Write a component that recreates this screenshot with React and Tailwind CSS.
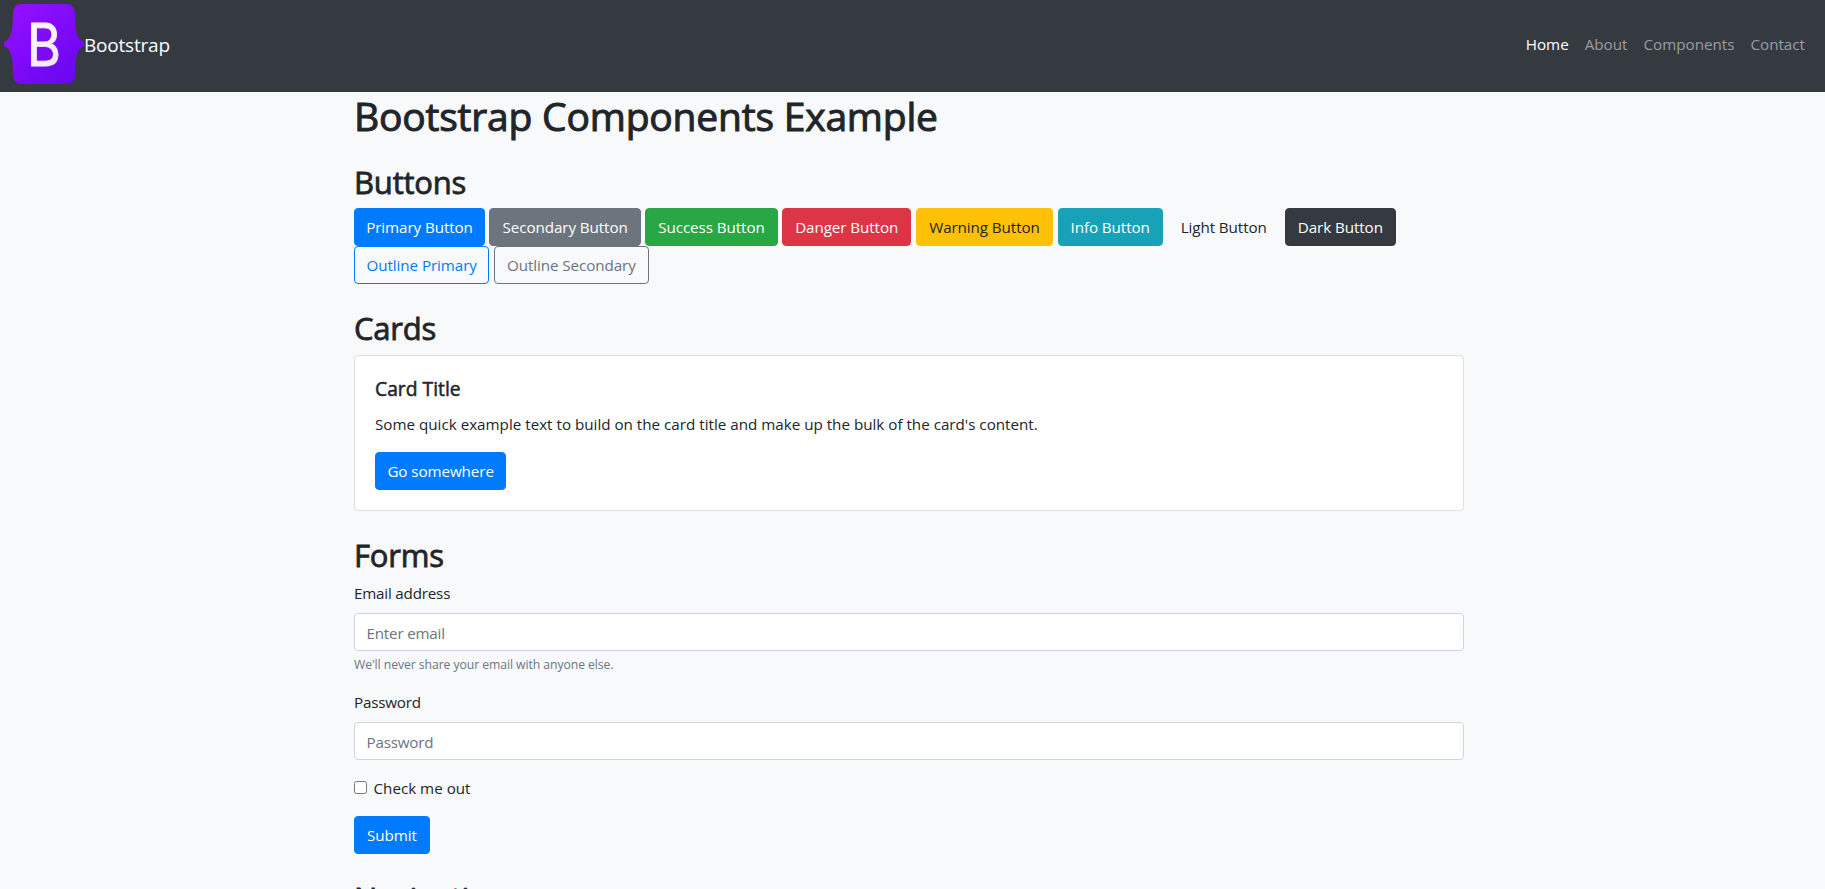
const buttons = [
  { label: 'Primary Button', look: 'w-[131px] border-[#007bff] bg-[#007bff] text-white' },
  { label: 'Secondary Button', look: 'w-[151.5px] border-[#6c757d] bg-[#6c757d] text-white' },
  { label: 'Success Button', look: 'w-[132.4px] border-[#28a745] bg-[#28a745] text-white' },
  { label: 'Danger Button', look: 'w-[129.3px] border-[#dc3545] bg-[#dc3545] text-white' },
  { label: 'Warning Button', look: 'w-[137.5px] border-[#ffc107] bg-[#ffc107] text-[#212529]' },
  { label: 'Info Button', look: 'w-[105px] border-[#17a2b8] bg-[#17a2b8] text-white' },
  { label: 'Light Button', look: 'w-[113.4px] border-[#f8f9fa] bg-[#f8f9fa] text-[#212529]' },
  { label: 'Dark Button', look: 'w-[111px] border-[#343a40] bg-[#343a40] text-white' },
  { label: 'Outline Primary', look: 'w-[135.4px] border-[#007bff] text-[#007bff]' },
  { label: 'Outline Secondary', look: 'w-[155.2px] border-[#6c757d] text-[#6c757d]' },
];

function Button({ look, children }) {
  return (
    <button
      type="button"
      className={`flex h-[38px] items-center justify-center rounded border pt-px text-[15.2px] tracking-[-0.08px] whitespace-nowrap ${look}`}
    >
      {children}
    </button>
  );
}

function Heading({ children }) {
  return (
    <h2 className="mt-6 mb-2 h-[38.4px] pt-px text-[31px] leading-[38.4px] tracking-[-0.2px] [-webkit-text-stroke:0.8px]">
      {children}
    </h2>
  );
}

function Field({ id, label, type, placeholder, children }) {
  return (
    <div className="mb-4">
      <label htmlFor={id} className="mb-2 block pt-px leading-[23px] tracking-[-0.2px]">{label}</label>
      <input
        id={id}
        type={type}
        placeholder={placeholder}
        className="block h-[38px] w-full rounded border border-[#ced4da] bg-white pt-0.5 pr-3 pl-[11.5px] tracking-[-0.2px] placeholder:text-[#6c757d]"
      />
      {children}
    </div>
  );
}

function Logo() {
  return (
    <svg className="size-20" viewBox="0 0 80 80" role="img" aria-label="Bootstrap logo">
      <defs>
        <linearGradient id="body" x1="0.1" y1="0" x2="0.9" y2="1">
          <stop offset="0" stopColor="#9410ff" />
          <stop offset="1" stopColor="#6806f0" />
        </linearGradient>
        <linearGradient id="letter" x1="0" y1="0" x2="0.4" y2="1">
          <stop offset="0" stopColor="#ffffff" />
          <stop offset="1" stopColor="#f1e5fc" />
        </linearGradient>
      </defs>
      <path
        transform="scale(0.15625 0.19608)"
        fill="url(#body)"
        d="M56.481 53.32C55.515 25.58 77.128 0 106.342 0h299.353c29.214 0 50.827 25.58 49.861 53.32-.928 26.647.277 61.165 8.964 89.31 8.715 28.232 23.411 46.077 47.48 48.37v26c-24.069 2.293-38.765 20.138-47.48 48.37-8.687 28.145-9.892 62.663-8.964 89.31.966 27.74-20.647 53.32-49.861 53.32H106.342c-29.214 0-50.827-25.58-49.86-53.32.927-26.647-.278-61.165-8.966-89.31C38.802 237.138 24.07 219.293 0 217v-26c24.069-2.293 38.802-20.138 47.516-48.37 8.688-28.145 9.893-62.663 8.965-89.31z"
      />
      <text
        transform="translate(23 61.5) scale(0.88 1)"
        fontFamily="Inter, sans-serif"
        fontSize="59"
        fill="url(#letter)"
        stroke="url(#letter)"
        strokeWidth="0.9"
      >
        B
      </text>
    </svg>
  );
}

export default function App() {
  return (
    <div className="h-[889px] overflow-hidden bg-[#f8f9fa] font-['Open_Sans',sans-serif] text-[15.2px] text-[#212529]">
      <nav className="flex h-[92px] items-center justify-between bg-[#343a40] pr-5 pl-1">
        <a href="#" className="flex items-center pb-1 text-[19px] tracking-[-0.2px] text-white">
          <Logo />
          <span className="pt-0.5">Bootstrap</span>
        </a>
        <div className="flex gap-4 pb-1 text-[#9a9da0]">
          <a href="#" className="text-white">Home</a>
          <a href="#">About</a>
          <a href="#">Components</a>
          <a href="#">Contact</a>
        </div>
      </nav>

      <main className="ml-[354px] w-[1110px]">
        <h1 className="h-[45.8px] text-[39px] leading-[47px] tracking-[-0.2px] [-webkit-text-stroke:1px]">
          Bootstrap Components Example
        </h1>

        <Heading>Buttons</Heading>
        <div className="flex flex-wrap gap-x-[4.4px]">
          {buttons.map((b) => (
            <Button key={b.label} look={b.look}>{b.label}</Button>
          ))}
        </div>

        <Heading>Cards</Heading>
        <div className="rounded border border-[#dfdfdf] bg-white p-5">
          <h5 className="mb-3 pt-px text-[19.3px] leading-[23px] [-webkit-text-stroke:0.5px]">Card Title</h5>
          <p className="mb-4 leading-6">
            Some quick example text to build on the card title and make up the bulk of the card's content.
          </p>
          <Button look="w-[131.3px] border-[#007bff] bg-[#007bff] text-white">Go somewhere</Button>
        </div>

        <Heading>Forms</Heading>
        <form>
          <Field id="email" label="Email address" type="email" placeholder="Enter email">
            <small className="mt-1 block pt-[2.4px] text-[12.2px] leading-[16.8px] tracking-[-0.06px] text-[#6c757d]">
              We'll never share your email with anyone else.
            </small>
          </Field>
          <Field id="password" label="Password" type="password" placeholder="Password" />
          <div className="mb-4 flex h-6 items-center">
            <input id="check" type="checkbox" className="mr-[6.5px] mb-[1px] size-[13px]" />
            <label htmlFor="check" className="pt-px">Check me out</label>
          </div>
          <Button look="w-[76px] border-[#007bff] bg-[#007bff] text-white">Submit</Button>
        </form>

        <Heading>Navigation</Heading>
      </main>
    </div>
  );
}
